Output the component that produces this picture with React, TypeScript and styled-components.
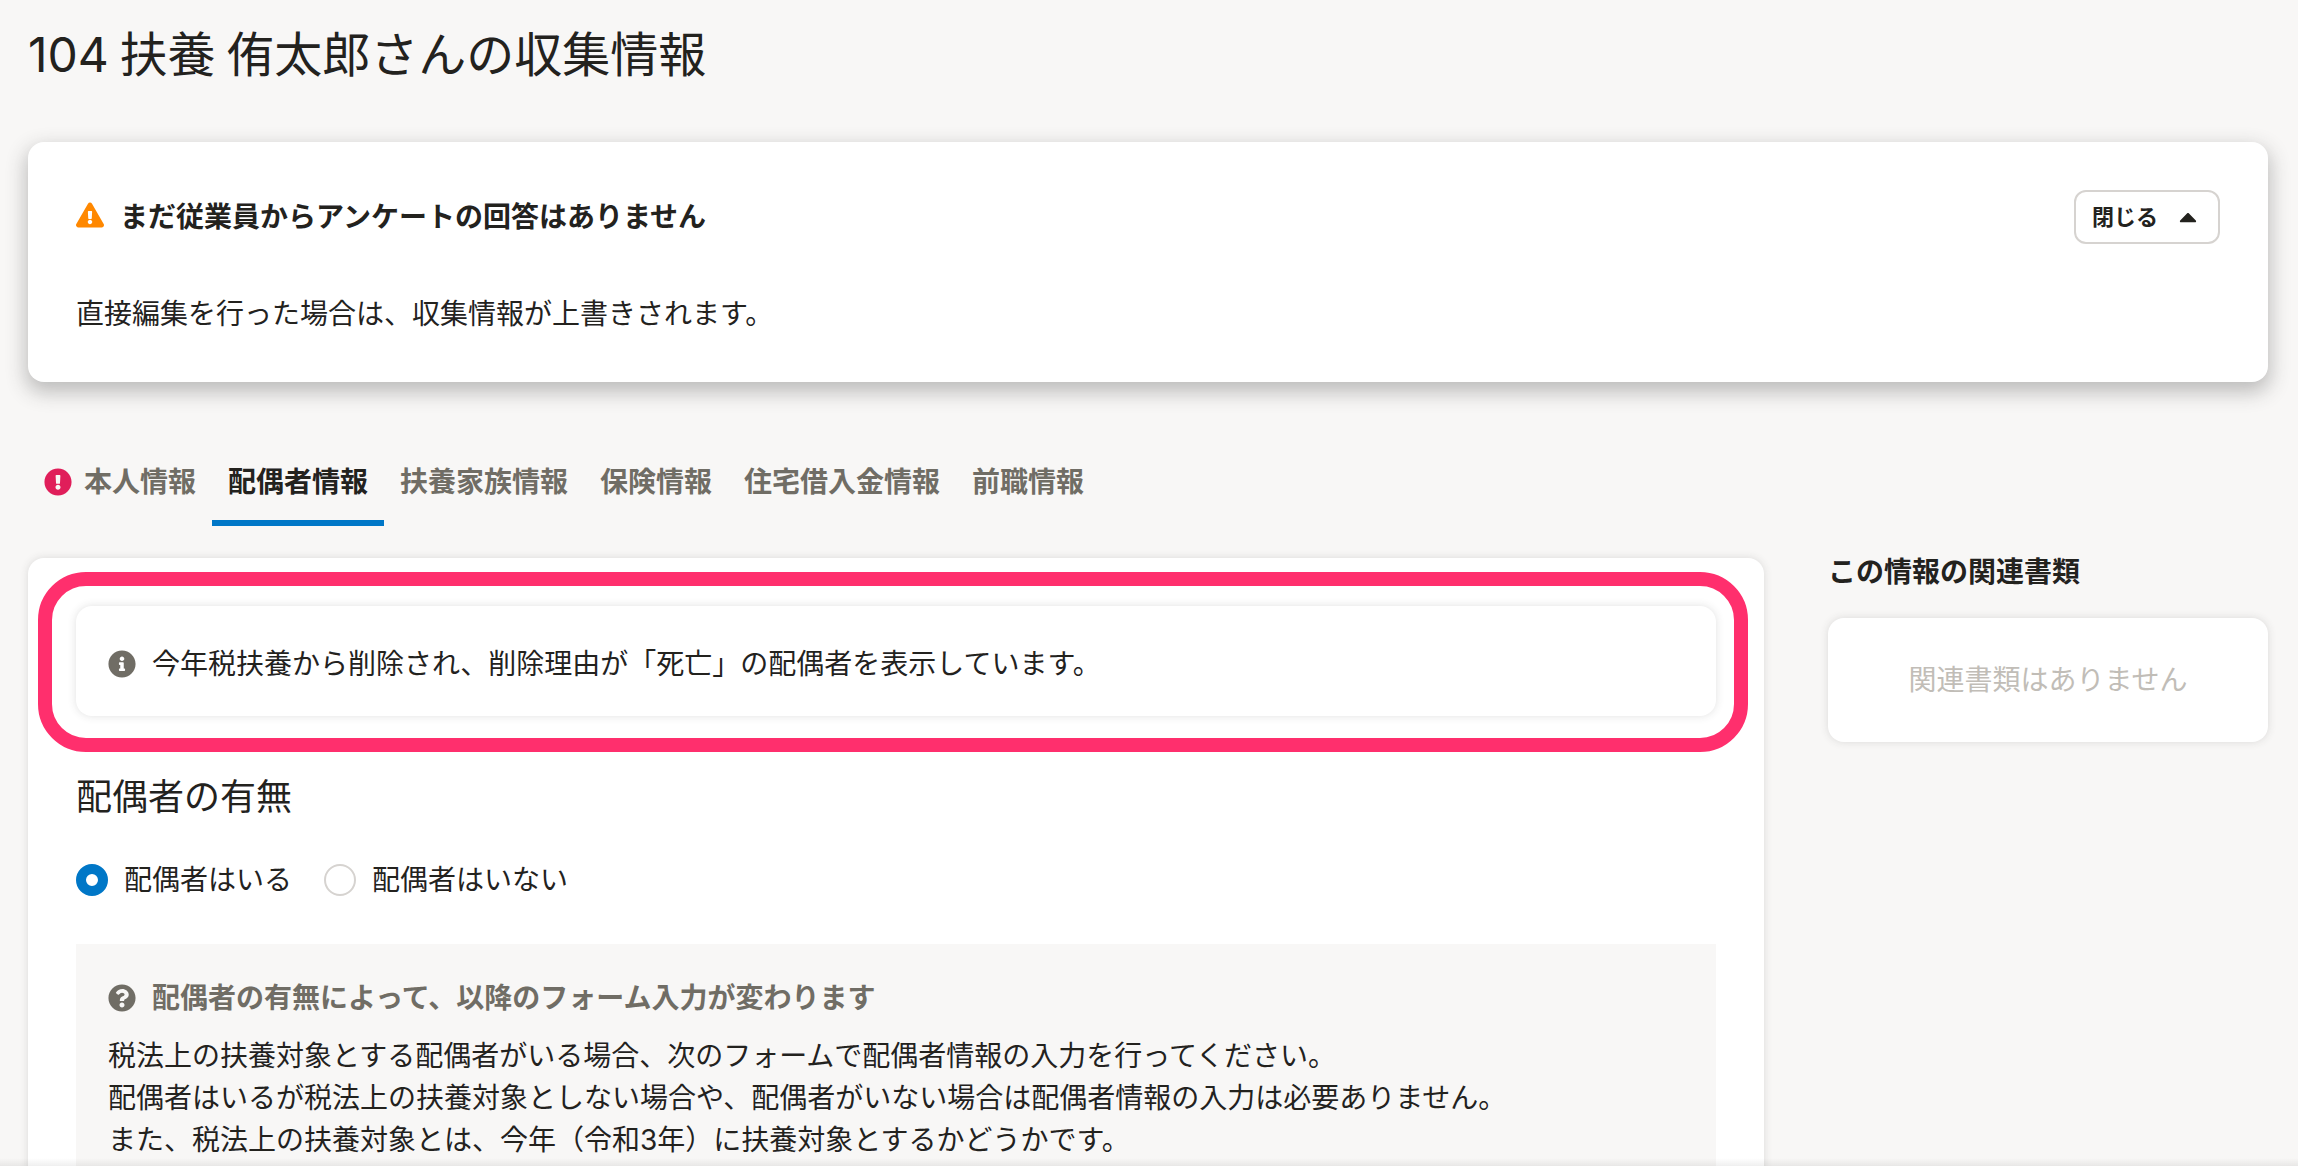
import React, { useState } from 'react';
import styled, { createGlobalStyle } from 'styled-components';
import {
  FaCaretUp,
  FaExclamationCircle,
  FaExclamationTriangle,
  FaInfoCircle,
  FaQuestionCircle,
} from 'react-icons/fa';

const color = {
  text: '#23221e',
  grey: '#706d65',
  disabled: '#c1bdb7',
  border: '#d6d3d0',
  background: '#f8f7f6',
  white: '#ffffff',
  main: '#0077c7',
  danger: '#e01e5a',
  warning: '#ff8800',
  marker: '#ff2f6d',
};

const GlobalStyle = createGlobalStyle`
  * {
    box-sizing: border-box;
  }

  body {
    margin: 0;
    background: ${color.background};
    color: ${color.text};
    font-family: Inter, 'Noto Sans CJK JP', sans-serif;
    font-size: 28px;
    line-height: 42px;
  }

  h1, h2, h3, p {
    margin: 0;
  }

  button, input {
    margin: 0;
    font-family: inherit;
  }
`;

const Page = styled.div`
  height: 100vh;
  padding: 15px 30px 0 28px;
  overflow-y: auto;
  scrollbar-width: none;

  &::after {
    content: '';
    position: fixed;
    right: 0;
    bottom: 0;
    left: 0;
    height: 8px;
    background: linear-gradient(rgba(51, 51, 51, 0), rgba(51, 51, 51, 0.08));
    pointer-events: none;
  }
`;

const PageTitle = styled.h1`
  margin-bottom: 55px;
  font-family: 'Noto Sans CJK JP', sans-serif;
  font-size: 48px;
  font-weight: 400;
  line-height: 72px;
`;

const EmployeeCode = styled.span`
  font-family: Inter, sans-serif;
  line-height: 1;
`;

const Alert = styled.section`
  display: flex;
  flex-direction: column;
  gap: 48px;
  padding: 48px 48px 46px;
  border-radius: 16px;
  background: ${color.white};
  box-shadow: 0 8px 20px 2px rgba(51, 51, 51, 0.3);
`;

const AlertHeader = styled.div`
  display: flex;
  align-items: center;
  justify-content: space-between;
`;

const IconHeading = styled.h2<{ $muted?: boolean }>`
  display: flex;
  align-items: center;
  gap: 16px;
  font-size: 28px;
  font-weight: 700;
  line-height: 44px;
  color: ${(p) => (p.$muted ? color.grey : color.text)};
`;

const Icon = styled.span<{ $color: string }>`
  display: flex;
  flex: none;
  color: ${(p) => p.$color};
`;

const WarningIcon = styled(Icon)`
  padding-bottom: 4px;
`;

const CloseButton = styled.button`
  display: flex;
  align-items: center;
  gap: 16px;
  height: 54px;
  padding: 0 16px;
  border: 2px solid ${color.border};
  border-radius: 12px;
  background: ${color.white};
  color: ${color.text};
  font-size: 22px;
  font-weight: 700;
  line-height: 32px;
`;

const AlertText = styled.p`
  line-height: 44px;
`;

const TabBar = styled.div`
  display: flex;
  margin: 54px 0 32px;
`;

const Tab = styled.button<{ $selected: boolean }>`
  display: flex;
  align-items: center;
  gap: 12px;
  padding: 24px 16px 16px;
  border: 0;
  border-bottom: 6px solid ${(p) => (p.$selected ? color.main : 'transparent')};
  background: none;
  color: ${(p) => (p.$selected ? color.text : color.grey)};
  font-size: 28px;
  font-weight: 700;
  line-height: 44px;
  white-space: nowrap;
`;

const Columns = styled.div`
  display: flex;
  align-items: flex-start;
  gap: 64px;
`;

const Card = styled.div`
  border-radius: 16px;
  background: ${color.white};
  box-shadow: 0 0 8px rgba(51, 51, 51, 0.15);
`;

const MainPanel = styled(Card)`
  flex: 1;
  min-width: 0;
  padding: 48px;
`;

const Highlighted = styled.div`
  position: relative;
  margin-bottom: 54px;

  &::after {
    content: '';
    position: absolute;
    inset: -34px -32px -36px -38px;
    border: 14px solid ${color.marker};
    border-radius: 48px;
    pointer-events: none;
  }
`;

const InfoCard = styled(Card)`
  display: flex;
  align-items: center;
  gap: 16px;
  padding: 37px 32px 31px;
`;

const SectionTitle = styled.h2`
  margin-bottom: 34px;
  font-size: 36px;
  font-weight: 400;
  line-height: 54px;
`;

const RadioGroup = styled.div`
  display: flex;
  gap: 32px;
  margin-bottom: 42px;
`;

const RadioLabel = styled.label`
  display: flex;
  align-items: center;
  gap: 16px;
  line-height: 44px;
`;

const Radio = styled.input`
  appearance: none;
  width: 32px;
  height: 32px;
  border: 2px solid ${color.border};
  border-radius: 50%;
  background: ${color.white};

  &:checked {
    border: 10px solid ${color.main};
  }
`;

const Notice = styled.div`
  display: flex;
  flex-direction: column;
  gap: 15px;
  padding: 32px;
  background: ${color.background};
`;

const Sidebar = styled.aside`
  display: flex;
  flex: none;
  flex-direction: column;
  gap: 32px;
  width: 440px;
`;

const SidebarTitle = styled.h2`
  font-size: 28px;
  font-weight: 700;
  line-height: 28px;
`;

const EmptyCard = styled(Card)`
  padding: 41px 32px;
  color: ${color.disabled};
  text-align: center;
`;

const tabs = [
  { label: '本人情報', hasError: true },
  { label: '配偶者情報' },
  { label: '扶養家族情報' },
  { label: '保険情報' },
  { label: '住宅借入金情報' },
  { label: '前職情報' },
];

const spouseOptions = ['配偶者はいる', '配偶者はいない'];

export default function App() {
  const [selectedTab, setSelectedTab] = useState('配偶者情報');
  const [spouse, setSpouse] = useState(spouseOptions[0]);
  const [open, setOpen] = useState(true);

  return (
    <>
      <GlobalStyle />
      <Page>
        <PageTitle>
          <EmployeeCode>104</EmployeeCode> 扶養 侑太郎さんの収集情報
        </PageTitle>

        <Alert>
          <AlertHeader>
            <IconHeading>
              <WarningIcon $color={color.warning}>
                <FaExclamationTriangle size={28} />
              </WarningIcon>
              まだ従業員からアンケートの回答はありません
            </IconHeading>
            <CloseButton type="button" aria-expanded={open} onClick={() => setOpen(!open)}>
              {open ? '閉じる' : '開く'}
              <FaCaretUp size={28} />
            </CloseButton>
          </AlertHeader>
          {open && <AlertText>直接編集を行った場合は、収集情報が上書きされます。</AlertText>}
        </Alert>

        <TabBar role="tablist">
          {tabs.map((tab) => (
            <Tab
              key={tab.label}
              type="button"
              role="tab"
              aria-selected={tab.label === selectedTab}
              $selected={tab.label === selectedTab}
              onClick={() => setSelectedTab(tab.label)}
            >
              {tab.hasError && (
                <Icon $color={color.danger}>
                  <FaExclamationCircle size={28} />
                </Icon>
              )}
              {tab.label}
            </Tab>
          ))}
        </TabBar>

        <Columns>
          <MainPanel as="main">
            <Highlighted>
              <InfoCard>
                <Icon $color={color.grey}>
                  <FaInfoCircle size={28} />
                </Icon>
                <p>今年税扶養から削除され、削除理由が「死亡」の配偶者を表示しています。</p>
              </InfoCard>
            </Highlighted>

            <SectionTitle>配偶者の有無</SectionTitle>
            <RadioGroup role="radiogroup" aria-label="配偶者の有無">
              {spouseOptions.map((option) => (
                <RadioLabel key={option}>
                  <Radio
                    type="radio"
                    name="spouse"
                    checked={option === spouse}
                    onChange={() => setSpouse(option)}
                  />
                  {option}
                </RadioLabel>
              ))}
            </RadioGroup>

            <Notice>
              <IconHeading as="h3" $muted>
                <Icon $color={color.grey}>
                  <FaQuestionCircle size={28} />
                </Icon>
                配偶者の有無によって、以降のフォーム入力が変わります
              </IconHeading>
              <p>
                税法上の扶養対象とする配偶者がいる場合、次のフォームで配偶者情報の入力を行ってください。
                <br />
                配偶者はいるが税法上の扶養対象としない場合や、配偶者がいない場合は配偶者情報の入力は必要ありません。
                <br />
                また、税法上の扶養対象とは、今年（令和3年）に扶養対象とするかどうかです。
              </p>
            </Notice>
          </MainPanel>

          <Sidebar>
            <SidebarTitle>この情報の関連書類</SidebarTitle>
            <EmptyCard>関連書類はありません</EmptyCard>
          </Sidebar>
        </Columns>
      </Page>
    </>
  );
}
